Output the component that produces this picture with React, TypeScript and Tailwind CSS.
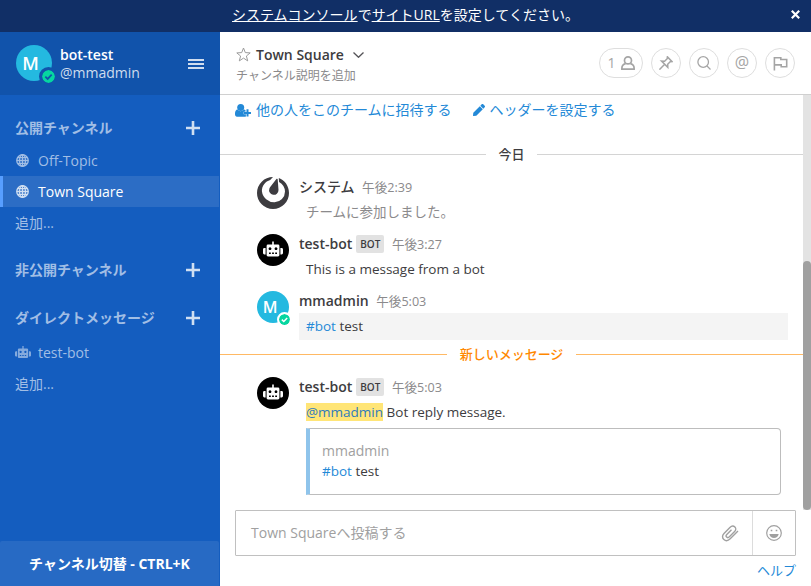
import type { ReactNode } from "react";
import { FaPen } from "react-icons/fa";

interface Post {
  id: string;
  user: string;
  time: string;
  avatar: ReactNode;
  bot?: boolean;
  body: ReactNode;
  className: string;
}

const BotGlyph = ({ className }: { className?: string }) => (
  <svg className={className} viewBox="0 0 20 16" fill="currentColor">
    <path
      fillRule="evenodd"
      d="M9.2 0h1.6v3H15a1.4 1.4 0 0 1 1.4 1.4v9.2A1.4 1.4 0 0 1 15 15H5a1.4 1.4 0 0 1-1.4-1.4V4.400A1.4 1.4 0 0 1 5 3h4.200zM7 5.800a1.400 1.400 0 1 0 .01 0zM13 5.800a1.400 1.400 0 1 0 .01 0zM6 11v1.500h1.800V11zM9.100 11v1.500h1.800V11zM12.200 11v1.500H14V11z"
    />
    <path d="M2.600 6.500v6.500H1.400A1.400 1.400 0 0 1 0 11.600V7.900a1.400 1.400 0 0 1 1.400-1.400zM17.400 6.500v6.500h1.200a1.400 1.400 0 0 0 1.400-1.400V7.900a1.400 1.400 0 0 0-1.400-1.400z" />
  </svg>
);

const Globe = ({ className }: { className?: string }) => (
  <svg className={className} viewBox="0 0 14 14" fill="none" stroke="currentColor" strokeWidth="1.400">
    <circle cx="7" cy="7" r="6.200" />
    <ellipse cx="7" cy="7" rx="3.200" ry="6.200" />
    <path d="M7 1v12M1 7h12M1.800 4h10.400M1.800 10h10.400" />
  </svg>
);

const InviteIcon = () => (
  <svg className="mr-[5px] h-[13px] w-4" viewBox="0 0 16 13" fill="currentColor">
    <circle cx="5.700" cy="3.500" r="3.500" />
    <path d="M2.600 5.600c.9 1.100 2 1.700 3.100 1.700s2.200-.6 3.100-1.700c.8 0 1.300.3 1.700.7v1.500H8.700v2.400h2.200v2.300c-.3.200-.7.200-1.200.2H2C.8 12.700 0 11.700 0 10.300c0-2.200.6-4.700 2.600-4.700z" />
    <path d="M11.500 5.300h2V8H16v2h-2.500v2.600h-2V10H9V8h2.500z" />
  </svg>
);

const Plus = () => (
  <svg className="size-[14px] text-[#d0dff2]" viewBox="0 0 14 14" stroke="currentColor" strokeWidth="2.600">
    <path d="M7 0v14M0 7h14" />
  </svg>
);

const OnlineDot = ({ className }: { className: string }) => (
  <svg className={className} viewBox="0 0 14 14">
    <circle cx="7" cy="7" r="7" fill="#06d6a0" />
    <path d="M3.600 7.200l2.500 2.400 4.300-4.600" fill="none" stroke="currentColor" strokeWidth="1.900" />
  </svg>
);

const SystemAvatar = () => (
  <svg className="size-8" viewBox="0 0 32 32" fill="#3d3c40">
    <path d="M21.800 1.100l.25 3.800A11.600 11.600 0 0 1 28 14.500 10.700 10.700 0 0 1 17.600 25.200 12.500 12.500 0 0 1 4.900 14.300C4.600 8.800 8.400 4.300 13.200 2.900L16 .1A16 16 0 0 0 0 16a16 16 0 1 0 32 0C32 9 27.600 3.200 21.800 1.100z" />
    <path d="M19.400 2.100c.5-.7 1.300-.5 1.300.4l.8 10.500a4.700 4.700 0 1 1-9.100-1.500c.3-.9.900-1.500 1.400-2.200z" />
  </svg>
);

const BotAvatar = () => (
  <div className="flex size-8 items-center justify-center rounded-full bg-black text-white">
    <BotGlyph className="mb-px h-[17px] w-[20px]" />
  </div>
);

const UserAvatar = () => (
  <div className="relative flex size-8 items-center justify-center rounded-full bg-[#24b9e0] font-['Open_Sans',sans-serif] text-[16px] text-white">
    <span className="mr-1.5 font-semibold">M</span>
    <OnlineDot className="absolute -right-[3px] -bottom-[4px] size-[15px] rounded-full border-2 border-white bg-white text-white" />
  </div>
);

const posts: Post[] = [
  {
    id: "join",
    user: "システム",
    time: "午後2:39",
    avatar: <SystemAvatar />,
    body: <span className="text-[#8b8a8c]">チームに参加しました。</span>,
    className: "h-[57px]",
  },
  {
    id: "bot-message",
    user: "test-bot",
    time: "午後3:27",
    bot: true,
    avatar: <BotAvatar />,
    body: "This is a message from a bot",
    className: "h-[57px]",
  },
  {
    id: "hashtag",
    user: "mmadmin",
    time: "午後5:03",
    avatar: <UserAvatar />,
    body: (
      <>
        <span className="text-[#2389d7]">#bot</span> test
      </>
    ),
    className: "h-[49px]",
  },
];

function PostHeader({ post }: { post: Pick<Post, "user" | "time" | "bot"> }) {
  return (
    <div className="flex h-[22px] items-center pb-0.5">
      <span className={post.user === "システム" ? "font-medium" : "font-semibold"}>{post.user}</span>
      {post.bot && (
        <span className="ml-1 flex h-[18px] items-center rounded-[2px] bg-[#e2e2e2] px-1 text-[10px] font-semibold">BOT</span>
      )}
      <span className="ml-[7.5px] pt-px text-[12.6px] text-[#8b8a8c]">{post.time}</span>
    </div>
  );
}

function PostRow({ post }: { post: Post }) {
  return (
    <div className={`flex pr-[15px] pl-[37px] ${post.className}`}>
      <div className="mr-[10px] w-8 shrink-0">{post.avatar}</div>
      <div className="flex-1">
        <PostHeader post={post} />
        <div
          className={`flex h-[27px] items-center whitespace-pre pb-0.5 pl-[7px] text-[13.5px] ${post.id === "hashtag" ? "bg-[#f4f4f4]" : ""}`}
        >
          <p>{post.body}</p>
        </div>
      </div>
    </div>
  );
}

function SectionHeader({ title, className }: { title: string; className: string }) {
  return (
    <div className={`flex items-center justify-between pr-[20px] pl-[15px] font-semibold text-[#a1bee5] ${className}`}>
      <span>{title}</span>
      <Plus />
    </div>
  );
}

function Sidebar() {
  return (
    <aside className="flex w-[220px] shrink-0 flex-col bg-[#145dbf] text-[#a1bee5]">
      <div className="flex h-[63px] items-center bg-[#1153ab] pr-4 pb-px pl-4">
        <div className="relative flex size-9 items-center justify-center rounded-full bg-[#24b9e0] font-['Open_Sans',sans-serif] text-[18px] font-semibold text-white">
          <span className="mr-[7px]">M</span>
          <OnlineDot className="absolute -right-[6px] -bottom-[5px] size-[19px] rounded-full border-[3px] border-[#1153ab] bg-[#1153ab] text-[#1153ab]" />
        </div>
        <div className="ml-2 flex-1 pt-px leading-[18px]">
          <div className="font-semibold text-white">bot-test</div>
          <div className="text-[#cfddee]">@mmadmin</div>
        </div>
        <svg className="mt-px h-[10px] w-4" viewBox="0 0 16 10" fill="#d0ddef">
          <path d="M0 0h16v2H0zM0 4h16v2H0zM0 8h16v2H0z" />
        </svg>
      </div>
      <SectionHeader title="公開チャンネル" className="mt-4 mb-px h-[33px]" />
      <div className="flex h-[31px] items-center pl-4">
        <Globe className="mr-[9px] size-[13px]" />
        Off-Topic
      </div>
      <div className="mr-px flex h-[31px] items-center border-l-3 border-[#579eff] bg-[#2c6dc5] pl-[13px] text-white">
        <Globe className="mr-[9px] size-[13px] text-[#d0dff2]" />
        Town Square
      </div>
      <div className="flex h-[31px] items-center pl-[15px]">追加...</div>
      <SectionHeader title="非公開チャンネル" className="mt-4 h-[31px]" />
      <SectionHeader title="ダイレクトメッセージ" className="mt-4 mb-px h-[33px]" />
      <div className="mt-0.5 flex h-[31px] items-center pl-[15px]">
        <BotGlyph className="mr-[7px] h-[13px] w-4 opacity-80" />
        test-bot
      </div>
      <div className="flex h-[31px] items-center pl-[15px]">追加...</div>
      <div className="mt-auto mr-px flex h-[45px] items-center justify-center rounded-t-[2px] bg-[#276ac4] font-bold text-white">
        チャンネル切替 - CTRL+K
      </div>
    </aside>
  );
}

const iconButton = "flex h-[30px] w-[30px] items-center justify-center rounded-full border border-[#dedede]";

function ChannelHeader() {
  return (
    <header className="flex h-[63px] items-center justify-between border-b border-[#d0d0d0] pr-4 pl-4">
      <div className="pt-[3px]">
        <div className="flex h-5 items-center font-semibold">
          <svg className="mr-[5px] size-[15px]" viewBox="0 0 15 15" fill="none" stroke="#9b9b9b">
            <path d="M7.500 1l1.800 4.600 4.900.3-3.800 3.100 1.300 4.900-4.200-2.800-4.200 2.800L4.600 9 .8 5.900l4.900-.3z" />
          </svg>
          Town Square
          <svg className="ml-[9px] h-[6px] w-[11px]" viewBox="0 0 11 6" fill="none" stroke="#555458" strokeWidth="1.300">
            <path d="M.5.5l5 4.800 5-4.800" />
          </svg>
        </div>
        <div className="mt-0.5 h-[18px] text-[12px] leading-[18px] text-[#8b8a8c]">チャンネル説明を追加</div>
      </div>
      <div className="flex gap-2 text-[#a5a5a5]">
        <div className="flex h-[30px] w-11 items-center justify-center gap-[5px] rounded-full border border-[#dedede] pl-px text-[14px]">
          1
          <svg className="mr-px size-[14px]" viewBox="0 0 14 14" fill="none" stroke="currentColor" strokeWidth="1.700">
            <circle cx="7" cy="4.400" r="3.500" />
            <path d="M4.600 7.600C2.300 8.300.9 9.500.9 12v1.100h12.200V12c0-2.500-1.400-3.700-3.700-4.400" />
          </svg>
        </div>
        <div className={iconButton}>
          <svg className="size-[14px]" viewBox="0 0 14 14" fill="none" stroke="currentColor" strokeWidth="1.500">
            <path d="M8.400.9l4.700 4.700-1.900.2-2.500 2.500.1 3.100-6.300-6.300 3.100.1L8.200 2.700zM5.200 8.800L.4 13.600" />
          </svg>
        </div>
        <div className={iconButton}>
          <svg className="size-[14px]" viewBox="0 0 14 14" fill="none" stroke="currentColor" strokeWidth="1.300">
            <circle cx="6.200" cy="6" r="5.300" />
            <path d="M10 10l3.500 3.500" />
          </svg>
        </div>
        <div className={`${iconButton} pb-0.5 text-[16px]`}>@</div>
        <div className={iconButton}>
          <svg className="size-[15px]" viewBox="0 0 15 15" fill="none" stroke="currentColor" strokeWidth="1.600">
            <path d="M1.400 14.500V1.800h6.400v1.700h5.900v7.200H8.200V8.900H1.400" />
          </svg>
        </div>
      </div>
    </header>
  );
}

function Separator({ label, isNew }: { label: string; isNew?: boolean }) {
  const line = isNew ? "h-px flex-1 bg-[#ffb964]" : "h-px flex-1 bg-[#d4d4d4]";
  return (
    <div className={isNew ? "flex h-[29px] items-center text-[#ff8800]" : "mt-[7px] flex h-[45px] items-center"}>
      <div className={line} />
      <span className="px-[12.5px] pb-0.5 text-[13px] font-medium">{label}</span>
      <div className={line} />
    </div>
  );
}

function Composer() {
  return (
    <footer className="flex flex-col px-[15px]">
      <div className="flex h-[46px] items-center rounded-[1px] border border-[#c0c0c0] text-[#a0a0a0]">
        <span className="flex-1 pl-[15px] text-[14px]">Town Squareへ投稿する</span>
        <svg className="mr-[13px] size-[18px]" viewBox="0 0 18 18" fill="none" stroke="currentColor" strokeWidth="1.400">
          <path d="M17 7l-7.800 7.800c-2 2-4.600 2.300-6.300.8-1.800-1.600-1.800-4.300.1-6.200l5.900-6c1.500-1.500 3.700-1.700 5-.4 1.200 1.200 1.100 3.200-.3 4.600l-5.200 5.200c-.9.900-2.100 1-2.800.3s-.6-1.800.2-2.600l4.700-4.700" />
        </svg>
        <div className="flex h-full w-[43px] items-center justify-center border-l border-[#dcdcdc]">
          <svg className="size-4" viewBox="0 0 16 16" fill="none" stroke="currentColor" strokeWidth="1.200">
            <circle cx="8" cy="8" r="7.300" />
            <path d="M3.300 9h9.400c-.5 2.400-2.400 4-4.700 4s-4.200-1.600-4.700-4z" fill="currentColor" stroke="none" />
            <path d="M4.700 5.500h1.600M9.700 5.500h1.600" strokeWidth="1.700" />
          </svg>
        </div>
      </div>
      <div className="mt-1 text-right text-[13px] leading-5 text-[#2389d7]">ヘルプ</div>
    </footer>
  );
}

export default function App() {
  return (
    <div className="flex h-[586px] w-[811px] flex-col overflow-hidden bg-white font-['Open_Sans','Noto_Sans_CJK_JP',sans-serif] text-[14px] leading-5 text-[#3d3c40]">
      <div className="flex h-8 shrink-0 items-center bg-[#112f66] pr-[10px] text-white">
        <p className="flex-1 pb-0.5 pl-5 text-center">
          <span className="underline">システムコンソール</span>で<span className="underline">サイトURL</span>を設定してください。
        </p>
        <svg className="mr-px mb-[3px] size-[9px]" viewBox="0 0 9 9" stroke="currentColor" strokeWidth="2.200">
          <path d="M.8.8l7.400 7.400M8.200.8L.8 8.200" />
        </svg>
      </div>
      <div className="flex min-h-0 flex-1">
        <Sidebar />
        <main className="flex min-w-0 flex-1 flex-col">
          <ChannelHeader />
          <div className="flex h-[415px]">
            <div className="min-w-0 flex-1">
              <div className="flex h-[30px] items-center pl-[15px] text-[#2389d7]">
                <InviteIcon />
                他の人をこのチームに招待する
                <FaPen className="mr-[5px] ml-[21px] size-3" />
                ヘッダーを設定する
              </div>
              <Separator label="今日" />
              {posts.map((p) => (
                <PostRow key={p.id} post={p} />
              ))}
              <Separator label="新しいメッセージ" isNew />
              <div className="mt-2 flex pr-[22px] pl-[37px]">
                <div className="mr-[10px] w-8 shrink-0">
                  <BotAvatar />
                </div>
                <div className="flex-1">
                  <PostHeader post={{ user: "test-bot", time: "午後5:03", bot: true }} />
                  <div className="pl-[7px]">
                    <p className="flex h-[26px] items-center whitespace-pre text-[13.5px]">
                      <span className="h-[18px] bg-[#ffe577] leading-[18px] text-[#2f7bbd]">@mmadmin</span> Bot reply message.
                    </p>
                    <div className="mt-[3px] h-[67px] rounded-r-[4px] border border-l-4 border-[#bdbdbd] border-l-[#8fc4eb] py-3 pl-3">
                      <div className="text-[#a0a0a0]">mmadmin</div>
                      <div className="text-[13.5px]">
                        <span className="text-[#2389d7]">#bot</span> test
                      </div>
                    </div>
                  </div>
                </div>
              </div>
            </div>
            <div className="flex w-2 flex-col justify-end bg-[#e3e3e3]">
              <div className="h-[249px] rounded bg-[#a0a0a0]" />
            </div>
          </div>
          <Composer />
        </main>
      </div>
    </div>
  );
}
